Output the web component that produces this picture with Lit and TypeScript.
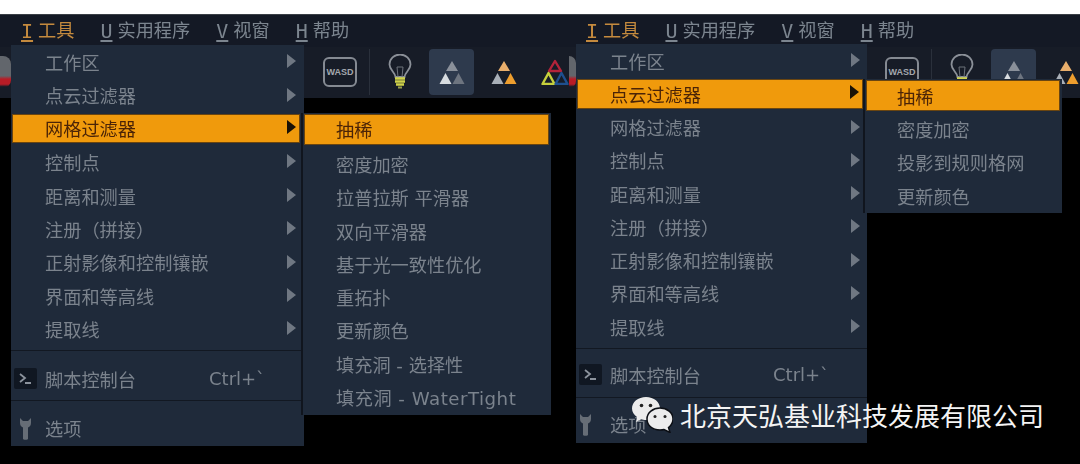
import { LitElement, html, css, svg, nothing } from "lit";
import { customElement } from "lit/decorators.js";
import { classMap } from "lit/directives/class-map.js";

const mainLabels = ["工作区", "点云过滤器", "网格过滤器", "控制点", "距离和测量", "注册（拼接）", "正射影像和控制镶嵌", "界面和等高线", "提取线"];
const leftSub = ["抽稀", "密度加密", "拉普拉斯 平滑器", "双向平滑器", "基于光一致性优化", "重拓扑", "更新颜色", "填充洞 - 选择性", "填充洞 - WaterTight"];
const rightSub = ["抽稀", "密度加密", "投影到规则格网", "更新颜色"];
const menubar = [
  { key: "I", label: "工具", on: true },
  { key: "U", label: "实用程序", on: false },
  { key: "V", label: "视窗", on: false },
  { key: "H", label: "帮助", on: false },
];

const tri = (a: string, b: string, c: string, outline = false) => html`<svg class="tri" viewBox="0 0 28 26">
  <g stroke-width=${outline ? 2.4 : 0} stroke-linejoin="round">
    ${svg`<path d="M14 2 L20 12 H8 Z" style="fill:${outline ? "none" : a};stroke:${a}"/>
    <path d="M7.5 14 L13.5 25 H1.5 Z" style="fill:${outline ? "none" : b};stroke:${b}"/>
    <path d="M20.5 14 L26.5 25 H14.5 Z" style="fill:${outline ? "none" : c};stroke:${c}"/>`}
  </g>
</svg>`;

const bulb = html`<svg class="bulb" viewBox="0 0 24 36">
  <path d="M7.5 23 C7 18 1.5 16 1.5 10.5 A10.5 10 0 0 1 22.5 10.5 C22.5 16 17 18 16.5 23 Z" fill="none" stroke="#8b9098" stroke-width="1.8"/>
  <path d="M10 23 L9 13 M14 23 L15 13 M9 13 H15" fill="none" stroke="#6d727b" stroke-width="1"/>
  <path d="M7 24.5 H17 M7 27.5 H17 M8 30.5 H16" stroke="#cfd24a" stroke-width="2.4"/>
  <path d="M10 33.5 H14" stroke="#9aa04a" stroke-width="2"/>
</svg>`;

@customElement("app-root")
export class AppRoot extends LitElement {
  static styles = css`
    :host {
      display: block;
      position: relative;
      width: 1080px;
      height: 464px;
      overflow: hidden;
      background: #000;
      font-family: "DejaVu Sans", "Noto Sans CJK SC", sans-serif;
    }
    .whitebar { height: 14px; background: #fff; }
    .screens { display: flex; height: 450px; }
    .screen { position: relative; overflow: hidden; flex: none; }
    .screen.a { width: 569px; }
    .screen.b { width: 511px; }

    .topbar { background: #171c27; height: 84px; display: flex; flex-direction: column; border-top: 1px solid #3a3f46; box-sizing: border-box; }
    .menubar { height: 32px; margin-bottom: -2px; display: flex; align-items: center; background: #141925; color: #7c858f; font-size: 18.2px; }
    .a .menubar { padding-left: 21px; }
    .b .menubar { padding-left: 17px; }
    .mb { display: flex; align-items: center; gap: 5px; filter: blur(0.4px); line-height: 24px; white-space: nowrap; }
    .mb u { font-family: "DejaVu Sans Mono", monospace; font-size: 20px; text-underline-offset: 2px; }
    .mb.on { color: #c48a3e; }
    .mb + .mb { margin-left: 26px; }

    .toolbar { height: 53px; display: flex; align-items: center; }
    .clip { flex: none; height: 32px; border-radius: 0 8px 8px 0; background: linear-gradient(#62666c 0 62%, #b81c26 72% 88%, #171c27 96%); filter: blur(0.6px); }
    .a .clip { width: 11px; margin-right: 312px; }
    .b .clip { width: 7px; margin-right: 309px; }
    .wasd { flex: none; width: 34px; height: 30px; box-sizing: border-box; border: 2.5px solid #858a92; border-radius: 6px; font: 700 9px "Liberation Sans", sans-serif; color: #a4a8ae; display: flex; align-items: center; justify-content: center; }
    .sep { flex: none; width: 1px; height: 46px; background: #2a303b; margin: 0 18px 0 12px; }
    .bulb { flex: none; width: 24px; height: 36px; }
    .active { flex: none; margin-left: 17px; width: 45px; height: 46px; border-radius: 4px; background: #2e3a4d; display: flex; align-items: center; justify-content: center; }
    .tri { flex: none; width: 28px; height: 26px; display: block; }
    .t1 { margin-left: 16px; }
    .t2 { margin-left: 23px; }

    .menu { position: absolute; background: #1f2a3a; color: #7b838d; font-size: 18.2px; box-sizing: border-box; z-index: 1; }
    .a .main { left: 11px; top: 31px; width: 293px; height: 401px; padding-top: 1.3px; --row: 33.4px; }
    .b .main { left: 7px; top: 30px; width: 291px; height: 399px; padding-top: 1.1px; --row: 33.25px; }
    .a .sub { left: 301px; top: 99px; width: 250px; height: 302px; z-index: 2; --row: 33.3px; }
    .b .sub { left: 294px; top: 65px; width: 199px; height: 134px; z-index: 2; --row: 33.3px; }
    .sub { border-left: 2px solid #10151e; }
    .row { position: relative; height: var(--row); display: flex; align-items: center; box-sizing: border-box; white-space: nowrap; }
    .main .row { padding-left: 34px; }
    .a .sub .row { padding-left: 33px; }
    .b .sub .row { padding-left: 32px; }
    .label { filter: blur(0.4px); }
    .main .label { margin-bottom: 2px; }
    .b .main .row.hl .label { margin-bottom: 0; }
    .a .sub .row.hl .label { margin-bottom: 2px; }
    .label.wide { letter-spacing: 0.5px; }
    .row.hl {
      background-color: #f09a0c;
      background-clip: padding-box;
      border-top: 1px solid transparent;
      border-bottom: 3px solid transparent;
      box-shadow: inset 0 0 0 1px #6a4510;
      color: #4b2407;
    }
    .main .row.hl { margin: 0 4px 0 1px; padding-left: 33px; }
    .sub .row.hl { margin: 0 2px 1px 1px; border-bottom-width: 1px; }
    .b .sub .row.hl { margin-bottom: 0; }
    .a .sub .row.hl { padding-left: 32px; }
    .b .sub .row.hl { padding-left: 31px; }
    .arrow { position: absolute; right: 8px; top: 8px; width: 0; height: 0; border-left: 9px solid #6f7782; border-top: 7px solid transparent; border-bottom: 7px solid transparent; }
    .b .arrow { right: 7px; }
    .row.hl .arrow { border-left-color: #1a1206; right: 4px; top: 6px; }
    .divider { height: 1px; background: #121822; margin: 3.5px 0 11.5px; }
    .b .divider { margin: 3.4px 0 10.4px; }
    .divider.second { margin-top: 4px; }
    .b .divider.second { margin-top: 5px; }
    .shortcut { position: absolute; left: 198px; font: 18px "DejaVu Sans", Arial, sans-serif; filter: blur(0.4px); margin-top: -2px; }
    .b .shortcut { left: 197px; }
    .ico { position: absolute; }
    .console { left: 3px; top: 5px; width: 23px; height: 21px; background: #101722; border-radius: 2px; color: #8b929c; }
    .wrench { left: 9px; top: 5px; width: 11px; height: 22px; }
    .b .wrench { left: 4px; }

    .mark { position: absolute; left: 632px; top: 397px; z-index: 3; display: flex; align-items: center; gap: 7px; color: #f4f4f4; font: 26px/36px "Noto Sans CJK SC", sans-serif; white-space: nowrap; }
    .logo { flex: none; width: 41px; height: 36px; }
  `;

  private renderScreen(cls: string, hl: string, sub: string[], tail: unknown) {
    return html`<div class="screen ${cls}">
      <div class="topbar">
        <div class="menubar">
          ${menubar.map((m) => html`<div class=${classMap({ mb: true, on: m.on })}><u>${m.key}</u><span>${m.label}</span></div>`)}
        </div>
        <div class="toolbar">
          <div class="clip"></div>
          <div class="wasd">WASD</div>
          <div class="sep"></div>
          ${bulb}
          <div class="active">${tri("#8a909a", "#d8dce0", "#6e7580")}</div>
          <div class="t1">${tri("#e8ae6c", "#a9afb7", "#ee9e2e")}</div>
          ${tail}
        </div>
      </div>
      <div class="menu main">
        ${mainLabels.map((label) => html`<div class=${classMap({ row: true, hl: label === hl })}>
          <span class="label">${label}</span><i class="arrow"></i>
        </div>`)}
        <div class="divider"></div>
        <div class="row">
          <svg class="ico console" viewBox="0 0 23 21">
            <path d="M6 6 L11 10 L6 14 M11 15 H17" fill="none" stroke="currentColor" stroke-width="1.8"/>
          </svg>
          <span class="label">脚本控制台</span><span class="shortcut">Ctrl+\`</span>
        </div>
        <div class="divider second"></div>
        <div class="row">
          <svg class="ico wrench" viewBox="0 0 11 22">
            <path d="M0 0 V5 C0 8 2 9 3 9.5 V21 C3 22 8 22 8 21 V9.5 C9 9 11 8 11 5 V0 L8 3 H3 Z" fill="#666d76"/>
          </svg>
          <span class="label">选项</span>
        </div>
      </div>
      <div class="menu sub">
        ${sub.map((label, i) => html`<div class=${classMap({ row: true, hl: i === 0 })}><span class=${classMap({ label: true, wide: label.includes("WaterTight") })}>${label}</span></div>`)}
      </div>
    </div>`;
  }

  render() {
    const tail = html`<div class="t2">${tri("#b3233a", "#c6d03c", "#1f4f8e", true)}</div>`;
    return html`
      <div class="whitebar"></div>
      <div class="screens">
        ${this.renderScreen("a", "网格过滤器", leftSub, tail)}
        ${this.renderScreen("b", "点云过滤器", rightSub, nothing)}
      </div>
      <div class="mark">
        <svg class="logo" viewBox="0 0 41 36">
          <path d="M14 0 C22 0 28 5 28 11.500 C28 18 22 23 14 23 C12 23 10.500 22.700 9 22.200 L4 25 L5 20 C2 18 0 15 0 11.500 C0 5 6 0 14 0 Z" fill="#ececec"/>
          <circle cx="9.500" cy="8.500" r="1.800" fill="#222"/>
          <circle cx="18.500" cy="8.500" r="1.800" fill="#222"/>
          <path d="M28 11 C35 11 41 15.500 41 22 C41 25.500 39 28.500 36.500 30.500 L38 35.500 L32 32.500 C30.500 33 29 33 28 33 C20 33 15 28 15 22 C15 15.500 21 11 28 11 Z" fill="#ececec" stroke="#0b0e14" stroke-width="1.500"/>
          <circle cx="23" cy="19.500" r="1.500" fill="#222"/>
          <circle cx="33" cy="19.500" r="1.500" fill="#222"/>
        </svg>
        <span>北京天弘基业科技发展有限公司</span>
      </div>
    `;
  }
}
